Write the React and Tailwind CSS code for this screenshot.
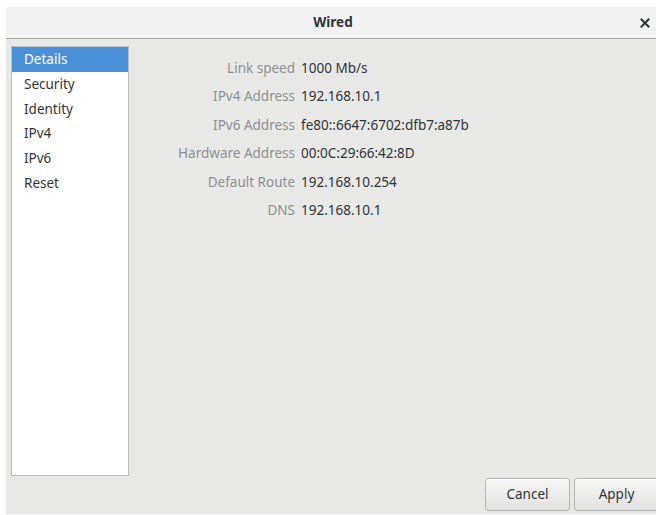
import React from "react";

const sections = ["Details", "Security", "Identity", "IPv4", "IPv6", "Reset"];

const details = [
  ["Link speed", "1000 Mb/s"],
  ["IPv4 Address", "192.168.10.1"],
  ["IPv6 Address", "fe80::6647:6702:dfb7:a87b"],
  ["Hardware Address", "00:0C:29:66:42:8D"],
  ["Default Route", "192.168.10.254"],
  ["DNS", "192.168.10.1"],
];

function CloseIcon() {
  return (
    <svg width="10" height="10" viewBox="0 0 10 10" aria-hidden="true">
      <path d="M1.5 1.5 L8.5 8.5 M8.5 1.5 L1.5 8.5" stroke="#2e3436" strokeWidth="2" strokeLinecap="square" />
    </svg>
  );
}

export default function App() {
  return (
    <div
      className="w-[656px] h-[515px] bg-white pl-[6px] pt-[7px] overflow-hidden"
      style={{ fontFamily: '"Noto Sans", "Open Sans", sans-serif' }}
    >
      <div className="w-[654px] h-[507px] flex flex-col bg-[#e8e8e7]">
        {/* title bar */}
        <div className="relative h-[32px] shrink-0 bg-[#f2f2f2] border-b border-[#a5a5a3] flex items-center justify-center">
          <span className="text-[13.5px] font-bold text-[#2e3436]">Wired</span>
          <div className="absolute right-[10px] top-[11px]">
            <CloseIcon />
          </div>
        </div>

        {/* body */}
        <div className="flex-1 flex flex-col px-[5px] pt-[7px]">
          <div className="flex h-[430px]">
            <div className="w-[118px] h-full bg-white border border-[#bfbcb8] flex flex-col">
              {sections.map((s, i) => (
                <div
                  key={s}
                  className={
                    "h-[24.7px] flex items-center pl-[12px] text-[13.5px] " +
                    (i === 0 ? "bg-[#4a90d9] text-white" : "text-[#2e3436]")
                  }
                >
                  {s}
                </div>
              ))}
            </div>

            <div className="flex-1 pt-[12px]">
              <div className="grid grid-cols-[166px_1fr] gap-x-[6px] gap-y-[8.4px] text-[13.5px] leading-[20px]">
                {details.map(([k, v]) => (
                  <React.Fragment key={k}>
                    <div className="text-right text-[#8d9091]">{k}</div>
                    <div className="text-[#2e3436]">{v}</div>
                  </React.Fragment>
                ))}
              </div>
            </div>
          </div>

          <div className="flex justify-end gap-[4px] mt-[2px] mr-[-4px]">
            <button className="w-[85px] h-[33px] rounded-[3px] border border-[#b6b6b3] bg-gradient-to-b from-[#f6f6f5] to-[#e2e2e0] text-[13.5px] text-[#2e3436] shadow-[inset_0_1px_0_white]">
              Cancel
            </button>
            <button className="w-[85px] h-[33px] rounded-[3px] border border-[#b6b6b3] bg-gradient-to-b from-[#f6f6f5] to-[#e2e2e0] text-[13.5px] text-[#2e3436] shadow-[inset_0_1px_0_white]">
              Apply
            </button>
          </div>
        </div>
      </div>
    </div>
  );
}
